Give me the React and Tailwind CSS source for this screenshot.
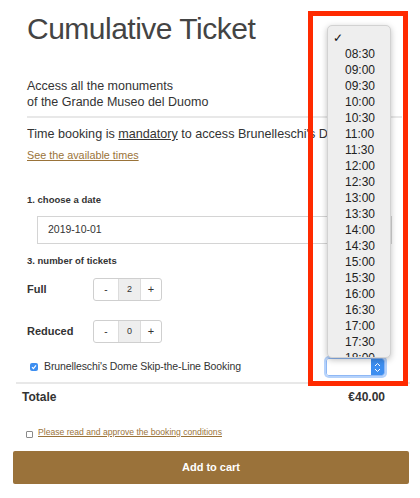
const times = [
  "08:30", "09:00", "09:30", "10:00", "10:30", "11:00", "11:30", "12:00",
  "12:30", "13:00", "13:30", "14:00", "14:30", "15:00", "15:30", "16:00",
  "16:30", "17:00", "17:30", "18:00",
];

function Stepper({ value }) {
  return (
    <div className="flex h-[23px] w-[69px] rounded-[3px] border border-[#cfcfcf] text-[10px] text-[#333]">
      <span className="flex w-[24px] items-center justify-center">-</span>
      <span className="flex w-[23px] items-center justify-center border-x border-[#dcdcdc] bg-[#eeeeee] text-[9px]">
        {value}
      </span>
      <span className="flex flex-1 items-center justify-center text-[11px]">+</span>
    </div>
  );
}

export default function App() {
  return (
    <div className="relative h-[498px] w-[420px] overflow-hidden bg-white font-['Liberation_Sans',Arial,sans-serif] text-[#333]">
      <div className="pl-[27px]">
        <h1 className="pt-[11px] text-[30px] font-light leading-[36px] tracking-[-0.5px] text-[#444]">
          Cumulative Ticket
        </h1>
        <p className="mt-[31px] text-[12.5px] leading-[16px]">
          Access all the monuments
          <br />
          of the Grande Museo del Duomo
        </p>
        <div className="mt-[6px] mr-[18px] border-t-2 border-[#e8e8e8]" />
        <div className="mt-[8px] w-[300px] overflow-hidden">
          <p className="whitespace-nowrap text-[12.6px] leading-[16px]">
            Time booking is <span className="underline">mandatory</span> to access Brunelleschi's Dome.
          </p>
        </div>
        <a className="mt-[6px] block text-[10.8px] leading-[14px] text-[#9a7339] underline">
          See the available times
        </a>

        <div className="mt-[32px] text-[9.5px] font-bold leading-[12px]">1. choose a date</div>
        <div className="mt-[10px] ml-[10px] flex h-[28px] w-[355px] items-center border border-[#d4d4d4] pl-[10px] text-[10.5px]">
          2019-10-01
        </div>
        <div className="mt-[11px] text-[9.5px] font-bold leading-[12px]">3. number of tickets</div>

        <div className="mt-[11px] flex items-center">
          <span className="w-[66px] text-[11px] font-bold">Full</span>
          <Stepper value="2" />
        </div>
        <div className="mt-[19px] flex items-center">
          <span className="w-[66px] text-[11px] font-bold">Reduced</span>
          <Stepper value="0" />
        </div>
      </div>

      <div className="mt-[15px] mr-[35px] ml-[30px] flex items-center">
        <span className="flex h-[8px] w-[8px] items-center justify-center rounded-[2px] bg-[#3d8ef0]">
          <svg width="6" height="6" viewBox="0 0 6 6">
            <path d="M1 3.2 L2.4 4.6 L5 1.4" stroke="white" strokeWidth="1.2" fill="none" />
          </svg>
        </span>
        <span className="ml-[6px] text-[10.5px] tracking-[-0.1px]">Brunelleschi's Dome Skip-the-Line Booking</span>
        <div className="ml-auto flex h-[18px] w-[59px] overflow-hidden rounded-[3px] border border-[#8fb8f5] shadow-[0_0_0_2px_#b5d2fb]">
          <span className="flex-1 bg-white" />
          <span className="flex w-[13px] items-center justify-center bg-[#3d8ef0]">
            <svg width="7" height="11" viewBox="0 0 7 11">
              <path d="M1 4 L3.5 1.5 L6 4 M1 7 L3.5 9.5 L6 7" stroke="white" strokeWidth="1" fill="none" />
            </svg>
          </span>
        </div>
      </div>

      <div className="mt-[6px] mr-[10px] ml-[16px] border-t-2 border-[#e8e8e8]" />

      <div className="mt-[5px] mr-[35px] ml-[22px] flex items-center justify-between text-[12px] font-bold leading-[16px]">
        <span>Totale</span>
        <span>€40.00</span>
      </div>

      <div className="mt-[21px] ml-[26px] flex items-center">
        <span className="mt-[5px] h-[7px] w-[7px] rounded-[1px] border border-[#8a8a8a] bg-white" />
        <a className="ml-[5px] text-[8.6px] leading-[11px] text-[#9a7339] underline">
          Please read and approve the booking conditions
        </a>
      </div>

      <button className="mt-[13px] ml-[13px] flex h-[33px] w-[396px] items-center justify-center rounded-[2px] bg-[#9a723a] text-[11px] font-bold text-white">
        Add to cart
      </button>

      <div className="absolute top-[11px] left-[308px] h-[375px] w-[100px] border-[5px] border-[#ff2a00]" />

      <div className="absolute top-[25px] left-[327px] h-[333px] w-[64px] overflow-hidden rounded-[5px] border border-[#d2d2d2] bg-[#eeeeee] pt-[4px] shadow-[0_2px_6px_rgba(0,0,0,0.25)]">
        <div className="flex h-[16px] items-center pl-[5px] text-[12px] text-[#111]">✓</div>
        {times.map((t) => (
          <div key={t} className="flex h-[16px] items-center pl-[17px] text-[12px] text-[#222]">
            {t}
          </div>
        ))}
      </div>
    </div>
  );
}
